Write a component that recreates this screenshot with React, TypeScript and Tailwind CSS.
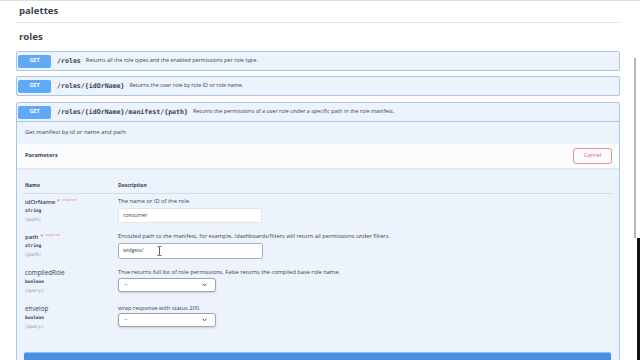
import React from "react";

function Badge() {
  return (
    <div className="w-[33px] h-[13px] shrink-0 bg-[#5fa9f7] rounded-[2px] flex items-center justify-center text-white text-[5.5px] font-bold leading-none">
      GET
    </div>
  );
}

function OpHeader({ path, desc }: { path: string; desc: string }) {
  return (
    <>
      <Badge />
      <span className="ml-[6px] font-['DejaVu_Sans_Mono',monospace] font-bold text-[6.6px] leading-none text-[#3b4151] whitespace-nowrap">
        {path}
      </span>
      <span className="ml-[5px] text-[5.4px] leading-none text-[#3b4151] whitespace-nowrap">{desc}</span>
    </>
  );
}

function Op({ path, desc, className }: { path: string; desc: string; className?: string }) {
  return (
    <div
      className={
        "h-[20px] border border-[#a8c8ea] rounded-[2px] bg-[#ecf3fc] flex items-center px-[1px] " + (className ?? "")
      }
    >
      <OpHeader path={path} desc={desc} />
    </div>
  );
}

function Chevron() {
  return (
    <svg width="5" height="4" viewBox="0 0 5 4" className="shrink-0">
      <path d="M0.6 0.8 L2.5 2.8 L4.4 0.8" fill="none" stroke="#4a4f5c" strokeWidth="1" />
    </svg>
  );
}

function ParamName({ name, type, loc, required }: { name: string; type: string; loc: string; required?: boolean }) {
  return (
    <div className="w-[93px] shrink-0 flex flex-col">
      <div className="h-[10px] flex items-center">
        <span className={"leading-none text-[#3b4151] " + (required ? "text-[6px] font-semibold" : "text-[6.3px]")}>{name}</span>
        {required && (
          <>
            <span className="ml-[2px] text-[5px] leading-none text-[#e05555] -mt-[2px]">*</span>
            <span className="ml-[2px] text-[3.6px] leading-none text-[#f08080] -mt-[4px]">required</span>
          </>
        )}
      </div>
      <div className="h-[9px] flex items-center font-['DejaVu_Sans_Mono',monospace] font-bold text-[4.5px] leading-none text-[#3b4151]">
        {type}
      </div>
      <div className="h-[9px] flex items-center font-['DejaVu_Sans_Mono',monospace] italic text-[4.5px] leading-none text-[#8a8f99]">
        ({loc})
      </div>
    </div>
  );
}

export default function App() {
  return (
    <div className="relative w-[640px] h-[360px] overflow-hidden bg-white border-t border-[#dedede] font-['Open_Sans',sans-serif] text-[#3b4151]">
      <div className="ml-[16px] w-[604px]">
        <div className="h-[22px] border-b border-[#e3e3e3] flex items-center pl-[3px] pb-[2px]">
          <span className="text-[9.6px] font-bold leading-none">palettes</span>
        </div>
        <div className="h-[28px] flex items-center pl-[3px]">
          <span className="text-[9.6px] font-bold leading-none">roles</span>
        </div>

        <Op path="/roles" desc="Returns all the role types and the enabled permissions per role type." />
        <Op className="mt-[5px]" path="/roles/{idOrName}" desc="Returns the user role by role ID or role name." />

        <div className="mt-[6px] border border-[#a8c8ea] rounded-[2px] bg-[#ecf3fc]">
          <div className="h-[19px] border-b border-[#a8c8ea] flex items-center px-[1px]">
            <OpHeader
              path="/roles/{idOrName}/manifest/{path}"
              desc="Returns the permissions of a user role under a specific path in the role manifest."
            />
          </div>
          <div className="h-[22px] flex items-center pl-[8px] text-[5.9px] leading-none">
            Get manifest by id or name and path
          </div>
          <div className="h-[24px] bg-[#fafcfe] shadow-[0_1px_2px_rgba(0,0,0,0.08)] flex items-center justify-between pl-[8px] pr-[7px]">
            <span className="text-[5.6px] font-bold leading-none">Parameters</span>
            <button className="w-[39px] h-[16px] border border-[#ee8c8c] rounded-[3px] bg-transparent text-[#e06060] text-[5.6px] leading-none flex items-center justify-center">
              Cancel
            </button>
          </div>

          <div className="ml-[6px] mr-[6px] h-[26px] border-b border-[#d6dce6] flex items-end pb-[4px] pl-[2px]">
            <div className="w-[93px] h-[8px] flex items-center text-[5px] font-bold leading-none">Name</div>
            <div className="h-[8px] flex items-center text-[5px] font-bold leading-none">Description</div>
          </div>

          <div className="ml-[8px] pt-[3px]">
            <div className="h-[35px] flex">
              <ParamName name="idOrName" type="string" loc="path" required />
              <div className="flex flex-col">
                <div className="h-[10px] flex items-center text-[5.8px] leading-none">The name or ID of the role.</div>
                <div className="mt-[1px] w-[144px] h-[15px] bg-white border border-[#e2e4e8] rounded-[2px] flex items-center pl-[4px] text-[5.2px] leading-none">
                  consumer
                </div>
              </div>
            </div>
            <div className="h-[36px] flex">
              <ParamName name="path" type="string" loc="path" required />
              <div className="flex flex-col">
                <div className="h-[10px] flex items-center text-[5.7px] leading-none whitespace-nowrap">
                  Encoded path to the manifest, for example, /dashboards/filters will return all permissions under filters.
                </div>
                <div className="relative mt-[1px] w-[145px] h-[16px] bg-white border border-[#a9b1bf] rounded-[2px] flex items-center pl-[4px] text-[5.2px] leading-none">
                  widgets/
                  <svg width="5" height="10" viewBox="0 0 5 10" className="absolute left-[38px] top-[2px]">
                    <path d="M0.5 0.5 H1.8 Q2.5 0.5 2.5 1.5 V8.5 Q2.5 9.5 1.8 9.5 H0.5 M4.5 0.5 H3.2 Q2.5 0.5 2.5 1.5 M2.5 8.5 Q2.5 9.5 3.2 9.5 H4.5" fill="none" stroke="#333" strokeWidth="0.8" />
                  </svg>
                </div>
              </div>
            </div>
            <div className="h-[36px] flex">
              <ParamName name="compiledRole" type="boolean" loc="query" />
              <div className="flex flex-col">
                <div className="h-[10px] flex items-center text-[5.7px] leading-none whitespace-nowrap">
                  True returns full list of role permissions. False returns the compiled base role name.
                </div>
                <div className="w-[98px] h-[14px] bg-white border border-[#9ea3ad] rounded-[3px] shadow-[0_1px_2px_rgba(0,0,0,0.15)] flex items-center justify-between pl-[5px] pr-[8px] text-[5.2px] leading-none">
                  <span>--</span>
                  <Chevron />
                </div>
              </div>
            </div>
            <div className="h-[40px] flex">
              <ParamName name="envelop" type="boolean" loc="query" />
              <div className="flex flex-col">
                <div className="h-[9px] flex items-center text-[5.7px] leading-none">wrap response with status 200.</div>
                <div className="w-[98px] h-[14px] bg-white border border-[#9ea3ad] rounded-[3px] shadow-[0_1px_2px_rgba(0,0,0,0.15)] flex items-center justify-between pl-[5px] pr-[8px] text-[5.2px] leading-none">
                  <span>--</span>
                  <Chevron />
                </div>
              </div>
            </div>
          </div>

          <div className="mt-[8px] ml-[7px] mr-[8px] h-[20px] bg-[#4990e2] border-t border-[#8fc1f2] rounded-t-[2px]" />
        </div>
      </div>

      <div className="absolute left-[634px] top-[57px] w-[2px] h-[180px] bg-[#b5b5b5]" />
      <div className="absolute left-[637px] top-[237px] w-[3px] h-[123px] bg-[#111]" />
    </div>
  );
}
